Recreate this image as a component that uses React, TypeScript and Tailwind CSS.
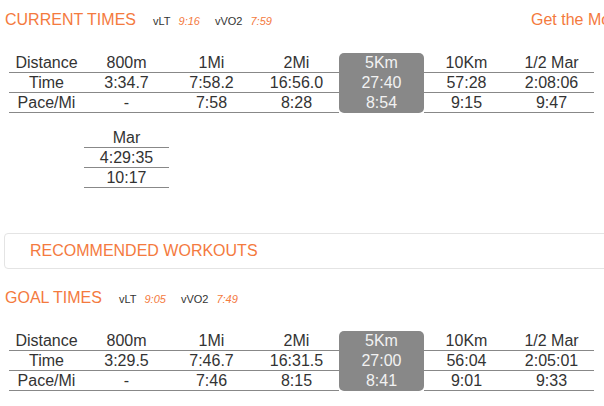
const currentRows = [
  { label: 'Distance', values: ['Time', 'Pace/Mi'] },
  { label: '800m', values: ['3:34.7', '-'] },
  { label: '1Mi', values: ['7:58.2', '7:58'] },
  { label: '2Mi', values: ['16:56.0', '8:28'] },
  { label: '5Km', values: ['27:40', '8:54'], active: true },
  { label: '10Km', values: ['57:28', '9:15'] },
  { label: '1/2 Mar', values: ['2:08:06', '9:47'] },
];

const goalRows = [
  { label: 'Distance', values: ['Time', 'Pace/Mi'] },
  { label: '800m', values: ['3:29.5', '-'] },
  { label: '1Mi', values: ['7:46.7', '7:46'] },
  { label: '2Mi', values: ['16:31.5', '8:15'] },
  { label: '5Km', values: ['27:00', '8:41'], active: true },
  { label: '10Km', values: ['56:04', '9:01'] },
  { label: '1/2 Mar', values: ['2:05:01', '9:33'] },
];

type Col = { label: string; values: string[]; active?: boolean };

function Column({ col, first }: { col: Col; first?: boolean }) {
  const cell = col.active
    ? 'h-[20px] flex items-center justify-center border-b border-transparent'
    : 'h-[20px] flex items-center justify-center border-b border-[#888]';
  return (
    <div
      className={
        (first ? 'w-[80px] pl-[5px] ' : 'w-[85px] ') +
        (col.active ? 'bg-[#888] rounded-[5px] text-[#f2f2f2]' : 'text-[#333]')
      }
    >
      <div className={cell}>{col.label}</div>
      {col.values.map((v, i) => (
        <div key={i} className={cell}>
          {v}
        </div>
      ))}
    </div>
  );
}

function Heading({ title, lt, vo2, link }: { title: string; lt: string; vo2: string; link?: boolean }) {
  return (
    <div className="flex h-[20px] items-center whitespace-nowrap">
      <div className="flex w-[531px] shrink-0 items-baseline pl-[5px]">
        <span className="text-[16px] text-[#f47a3e]">{title}</span>
        <span className="ml-[17px] text-[11px] text-[#333]">vLT</span>
        <span className="ml-[8px] text-[11px] italic text-[#f47a3e]">{lt}</span>
        <span className="ml-[15px] text-[11px] text-[#333]">vVO2</span>
        <span className="ml-[8px] text-[11px] italic text-[#f47a3e]">{vo2}</span>
      </div>
      {link && <span className="shrink-0 text-[16px] text-[#f47a3e]">Get the Mobile App</span>}
    </div>
  );
}

export default function App() {
  return (
    <div
      className="w-[604px] h-[406px] overflow-hidden bg-white text-[16px] leading-none"
      style={{ fontFamily: '"Liberation Sans", Arial, sans-serif' }}
    >
      <div className="pt-[10px]">
        <Heading title="CURRENT TIMES" lt="9:16" vo2="7:59" link />
      </div>

      <div className="mt-[23px] ml-[4px] flex">
        {currentRows.map((c, i) => (
          <Column key={i} col={c} first={i === 0} />
        ))}
      </div>

      <div className="mt-[15px] ml-[84px] flex">
        <Column col={{ label: 'Mar', values: ['4:29:35', '10:17'] }} />
      </div>

      <div className="mt-[45px] ml-[4px] flex h-[36px] w-[640px] items-center rounded-[4px] border border-[#e4e4e4] pl-[25px]">
        <span className="text-[16px] text-[#f47a3e]">RECOMMENDED WORKOUTS</span>
      </div>

      <div className="mt-[19px]">
        <Heading title="GOAL TIMES" lt="9:05" vo2="7:49" />
      </div>

      <div className="mt-[23px] ml-[4px] flex">
        {goalRows.map((c, i) => (
          <Column key={i} col={c} first={i === 0} />
        ))}
      </div>
    </div>
  );
}
